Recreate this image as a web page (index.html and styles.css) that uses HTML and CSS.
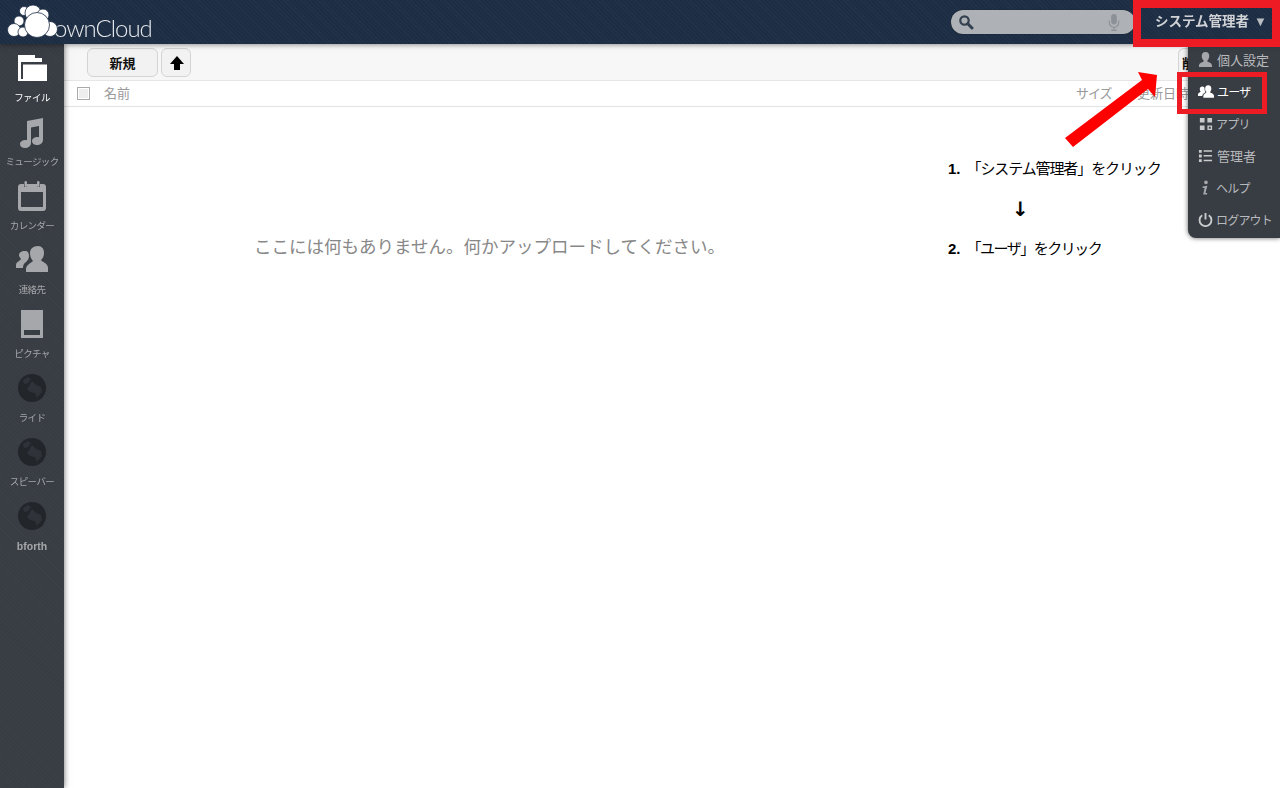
FILE: index.html
```html
<!DOCTYPE html>
<html lang="ja">
  <head>
    <meta charset="utf-8" />
    <title>ownCloud</title>
    <link rel="stylesheet" href="styles.css">
  </head>

  <body>
    <!-- HEADER -->
    <header class="header">
      <div class="logo">
        <span class="logo-text">ownCloud</span>
        <svg class="logo-cloud" viewBox="0 0 60 44">
          <g fill="#fff" stroke="#1d2d44" stroke-width=".8">
            <circle cx="24" cy="11" r="4.500"/>
            <circle cx="33" cy="13" r="8"/>
            <circle cx="43" cy="15" r="6"/>
            <circle cx="19" cy="21" r="5"/>
            <circle cx="14" cy="30" r="6.500"/>
            <circle cx="23" cy="32" r="5"/>
            <circle cx="50" cy="29" r="7.500"/>
            <circle cx="37" cy="25" r="12.500"/>
          </g>
        </svg>
      </div>
      <div class="search">
        <svg class="search-icon" viewBox="0 0 16 16">
          <circle cx="6.500" cy="6.500" r="4.200" fill="none" stroke="#33404f" stroke-width="2.200"/>
          <path d="M9.800 9.800L14 14" stroke="#33404f" stroke-width="3" stroke-linecap="round"/>
        </svg>
        <svg class="mic-icon" viewBox="0 0 12 18">
          <rect x="3" y="0" width="6" height="11" rx="3" fill="#8b9197"/>
          <path d="M1 7v2a5 5 0 0 0 10 0V7M6 14v3M3 17.300h6" fill="none" stroke="#8b9197" stroke-width="1.200"/>
        </svg>
      </div>
      <div class="user">システム管理者<span class="user-caret">▼</span></div>
    </header>

    <!-- SIDEBAR -->
    <nav class="nav">
      <a class="nav-item active">
        <svg class="nav-icon" viewBox="0 0 32 32">
          <path fill="#fff" d="M2 3H19V6H26V10H5V27H7V12.500H31V29H2z"/>
        </svg>
        <span>ファイル</span>
      </a>
      <a class="nav-item">
        <svg class="nav-icon" viewBox="0 0 32 32">
          <path fill="#a5a7aa" d="M11 5l16-3v22c0 3-3 5-6 5s-5-1.500-5-4 3-4 5.500-4c.7 0 1.500.1 1.500.3V10l-8 1.500V27c0 3-3 5-6 5s-5-1.500-5-4 3-4 5.500-4c.7 0 1.500.1 1.500.3z"/>
        </svg>
        <span>ミュージック</span>
      </a>
      <a class="nav-item">
        <svg class="nav-icon" viewBox="0 0 32 32">
          <path fill="#a5a7aa" fill-rule="evenodd" d="M5 4h3v3h3V4h10v3h3V4h3a3 3 0 0 1 3 3v21a3 3 0 0 1-3 3H5a3 3 0 0 1-3-3V7a3 3 0 0 1 3-3zM5 12v15h22V12z"/>
          <rect x="8.500" y="1" width="2.500" height="6" rx="1.200" fill="#a5a7aa"/>
          <rect x="21" y="1" width="2.500" height="6" rx="1.200" fill="#a5a7aa"/>
        </svg>
        <span>カレンダー</span>
      </a>
      <a class="nav-item">
        <svg class="nav-icon" viewBox="0 0 32 32">
          <path fill="#a5a7aa" d="M22 2c4 0 6 3 6 7 0 3-1 5-3 7 1 2 7 3 7 8v4H10v-3c0-4 5-6 7-8-2-2-3-5-3-8 0-4 3-7 8-7z"/>
          <path fill="#a5a7aa" d="M9 7c3 0 4 2 4 5 0 2-1 4-2 5-2 2-4 3-4 7H0v-3c0-3 4-4 5-6-1-1-2-3-2-4 0-2 2-4 6-4z"/>
        </svg>
        <span>連絡先</span>
      </a>
      <a class="nav-item">
        <svg class="nav-icon" viewBox="0 0 32 32">
          <path fill="#a5a7aa" fill-rule="evenodd" d="M5 2h22v28H5zM8 22v5h16v-5z"/>
        </svg>
        <span>ピクチャ</span>
      </a>
      <a class="nav-item">
        <svg class="nav-icon nav-globe" viewBox="0 0 32 32"><use href="#globe"/></svg>
        <span>ライド</span>
      </a>
      <a class="nav-item">
        <svg class="nav-icon nav-globe" viewBox="0 0 32 32"><use href="#globe"/></svg>
        <span>スピーバー</span>
      </a>
      <a class="nav-item">
        <svg class="nav-icon nav-globe" viewBox="0 0 32 32"><use href="#globe"/></svg>
        <span class="nav-latin">bforth</span>
      </a>
    </nav>

    <svg class="defs" width="0" height="0">
      <symbol id="globe" viewBox="0 0 32 32">
        <circle cx="16" cy="16" r="14" fill="#22252a"/>
        <path fill="#2f3238" d="M7 8l5-3 3 2-3 4-4 1zM16 9l4 4 5 2 1 5-5 6-2-5-5-1-3-3 2-3z"/>
      </symbol>
    </svg>

    <!-- FILES -->
    <main class="content">
      <div class="controls">
        <button class="btn btn-new">新規</button>
        <button class="btn btn-upload">
          <svg viewBox="0 0 16 16" width="16" height="16"><path d="M8 1l7 8h-4v6H5V9H1z"/></svg>
        </button>
        <button class="btn btn-trash">削</button>
      </div>
      <div class="table-head">
        <span class="check"></span>
        <span class="col-name">名前</span>
        <span class="col-size">サイズ</span>
        <span class="col-date">更新日時</span>
      </div>
      <p class="empty">ここには何もありません。何かアップロードしてください。</p>
    </main>

    <!-- USER MENU -->
    <ul class="menu">
      <li>
        <svg viewBox="0 0 16 16"><path fill="#a5a7aa" d="M8 0c3 0 4 2 4 4.500 0 2-1 3.500-2 4.500v1c1 1 5 1 5 5v1H1v-1c0-4 4-4 5-5V9C5 8 4 6.500 4 4.500 4 2 5 0 8 0z"/></svg>
        個人設定
      </li>
      <li class="current kana">
        <svg viewBox="0 0 18 16"><path fill="#fff" d="M11.500 1c2.500 0 3.500 1.800 3.500 3.800 0 1.700-.8 3-1.500 3.700 0 1 4.500 1.500 4.500 4.500V15H6v-2c0-2 3-3 3.500-4.500C8.700 7.500 8 6.500 8 4.800 8 2.800 9 1 11.500 1zM5 2.500c1.600 0 2.300 1 2.400 2.200 0 1.300.2 2.800 1 3.800C7 10 4.800 11 4.800 13H0v-2c0-1.500 2.700-2 3-3C2.400 7.300 2 6.300 2 5.200 2 3.700 3 2.500 5 2.500z"/></svg>
        ユーザ
      </li>
      <li class="kana">
        <svg viewBox="0 0 16 16"><path fill="#c9cacb" d="M2 2h5v5H2zM10 2h5v5h-5zM2 10h5v5H2z"/><path fill="none" stroke="#c9cacb" stroke-width="1.500" d="M10.800 10.800h3.500v3.500h-3.500z"/></svg>
        アプリ
      </li>
      <li>
        <svg viewBox="0 0 16 16"><path fill="#c9cacb" d="M1 2h3v3H1zM1 7h3v3H1zM1 12h3v3H1zM6 2.500h9v1.500H6zM6 7.500h9V9H6zM6 12.500h9V14H6z"/></svg>
        管理者
      </li>
      <li class="kana">
        <svg viewBox="0 0 16 16"><path fill="#a5a7aa" d="M8.500 0.500a2 2 0 1 1 0 4 2 2 0 0 1 0-4zM5 7l5-1-2 7.500 2 .5-.5 1.500H5.500L7 8.500 5 8.500z"/></svg>
        ヘルプ
      </li>
      <li class="kana">
        <svg viewBox="0 0 16 16"><path fill="none" stroke="#c9cacb" stroke-width="2" d="M4.500 3.500a6.300 6.300 0 1 0 7 0M8 1v7"/></svg>
        ログアウト
      </li>
    </ul>

    <!-- ANNOTATIONS -->
    <div class="mark mark-user"></div>
    <div class="mark mark-item"></div>
    <svg class="mark-arrow" viewBox="0 0 1280 788">
      <path fill="#f00" d="M1065 138L1142 80 1138 72 1157 75 1155 97 1148 89 1073 147z"/>
    </svg>
    <ol class="steps">
      <li><b>1.</b>「システム管理者」をクリック</li>
      <li class="steps-down">↓</li>
      <li class="steps-short"><b>2.</b>「ユーザ」をクリック</li>
    </ol>
  </body>
</html>
```

FILE: styles.css
```css
* {
  box-sizing: border-box;
}
html, body {
  height: 100%;
}
body {
  margin: 0;
  overflow: hidden;
  background: #fff;
  font-family: "Liberation Sans", "Noto Sans CJK JP", sans-serif;
  font-size: 13px;
  color: #555;
}

/* header */
.header {
  position: relative;
  z-index: 3;
  display: flex;
  align-items: center;
  height: 44px;
  background: #1d2d44 repeating-linear-gradient(45deg, rgba(255, 255, 255, .025) 0 1px, transparent 1px 3px);
  box-shadow: 0 0 6px rgba(0, 0, 0, .55);
}
.logo {
  position: relative;
  width: 160px;
  height: 44px;
  margin-right: auto;
}
.logo-cloud {
  position: absolute;
  left: 0;
  top: 0;
  width: 60px;
  height: 44px;
}
.logo-text {
  position: absolute;
  left: 54px;
  top: 12px;
  font-family: Lato, sans-serif;
  font-weight: 300;
  font-size: 24px;
  line-height: 32px;
  letter-spacing: -1px;
  color: #e6e8eb;
}
.search {
  display: flex;
  align-items: center;
  justify-content: space-between;
  width: 184px;
  height: 24px;
  margin-right: 6px;
  padding: 0 15px 0 7px;
  border-radius: 12px;
  background: #aeb2b7;
  box-shadow: 0 0 1px #000;
}
.search-icon {
  width: 16px;
  height: 16px;
}
.mic-icon {
  width: 12px;
  height: 17px;
}
.user {
  width: 139px;
  height: 44px;
  padding-left: 14px;
  line-height: 44px;
  font-size: 13.500px;
  font-weight: 700;
  color: #d0d2d6;
  white-space: nowrap;
}
.user-caret {
  margin-left: 5px;
  font-size: 13px;
  color: #b9bcc1;
}

/* sidebar */
.nav {
  position: fixed;
  left: 0;
  top: 44px;
  bottom: 0;
  z-index: 2;
  width: 64px;
  padding-top: 8px;
  background: #383c43 repeating-linear-gradient(45deg, rgba(255, 255, 255, .015) 0 1px, transparent 1px 3px);
  box-shadow: 0 0 6px rgba(0, 0, 0, .6);
}
.nav-item {
  display: flex;
  flex-direction: column;
  align-items: center;
  height: 64px;
  font-size: 9.500px;
  line-height: 14px;
  letter-spacing: -.6px;
  color: #a5a7aa;
  white-space: nowrap;
}
.nav-item.active {
  color: #fff;
}
.nav-icon {
  width: 32px;
  height: 32px;
  margin-bottom: 7px;
}
.nav-globe {
  filter: blur(.5px);
}
.nav-latin {
  font-size: 10.500px;
  font-weight: 700;
  letter-spacing: 0;
}
.defs {
  position: absolute;
}

/* file list */
.content {
  margin-left: 64px;
}
.controls {
  display: flex;
  align-items: center;
  height: 37px;
  padding: 1px 92px 0 23px;
  gap: 3px;
  background: #f7f7f7;
  border-bottom: 1px solid #e6e6e6;
}
.btn {
  display: flex;
  align-items: center;
  justify-content: center;
  height: 29px;
  padding: 0;
  border: 1px solid #d4d4d4;
  border-radius: 6px;
  background: #f2f2f2;
  font: 700 13px "Liberation Sans", "Noto Sans CJK JP", sans-serif;
  color: #111;
}
.btn-new {
  width: 71px;
}
.btn-upload {
  width: 30px;
  padding-left: 1px;
}
.btn-trash {
  width: 10px;
  margin-left: auto;
  justify-content: flex-start;
  padding-left: 3px;
  border-right: 0;
  border-radius: 6px 0 0 6px;
  overflow: hidden;
}
.table-head {
  display: flex;
  align-items: center;
  height: 26px;
  padding: 0 0 2px 13px;
  border-bottom: 1px solid #e3e3e3;
  color: #999;
  font-size: 13px;
}
.check {
  width: 13px;
  height: 13px;
  margin-top: 2px;
  border: 1px solid #aaa;
  background: #eee;
  box-shadow: inset 0 0 0 1px #fff;
}
.col-name {
  margin-left: 14px;
  margin-right: auto;
}
.col-size {
  width: 61px;
  letter-spacing: -1px;
}
.col-date {
  width: 143px;
}
.empty {
  margin: 128px 0 0 190px;
  font-size: 17.500px;
  line-height: 24px;
  color: #888;
}

/* user menu */
.menu {
  position: absolute;
  right: 0;
  top: 44px;
  z-index: 2;
  width: 92px;
  height: 194px;
  margin: 0;
  padding: 0;
  list-style: none;
  background: #383c43;
  border-bottom-left-radius: 8px;
  box-shadow: 0 0 5px rgba(0, 0, 0, .6);
  color: #b8babd;
}
.menu li {
  display: flex;
  align-items: center;
  gap: 4px;
  height: 32px;
  padding: 0 0 2px 10px;
  white-space: nowrap;
}
.menu li svg {
  width: 15px;
  height: 15px;
  flex: none;
}
.menu li.kana {
  gap: 3px;
  padding-bottom: 1px;
  font-size: 12px;
  letter-spacing: -.8px;
}
.menu li.current {
  color: #fff;
}
.menu li.current svg {
  width: 16px;
  height: 15px;
}

/* red annotations pasted on the shot */
.mark {
  position: absolute;
  z-index: 4;
  border-style: solid;
  border-color: #ed1c24;
}
.mark-user {
  left: 1133px;
  top: 0;
  width: 147px;
  height: 47px;
  border-width: 8px;
}
.mark-item {
  left: 1177px;
  top: 72px;
  width: 90px;
  height: 42px;
  border-width: 5px;
}
.mark-arrow {
  position: absolute;
  left: 0;
  top: 0;
  z-index: 4;
  width: 1280px;
  height: 788px;
  pointer-events: none;
}
.steps {
  position: absolute;
  left: 948px;
  top: 157px;
  z-index: 1;
  margin: 0;
  padding: 0;
  list-style: none;
  font-size: 15px;
  line-height: 24px;
  letter-spacing: -1.100px;
  color: #000;
}
.steps li {
  height: 40px;
  white-space: nowrap;
}
.steps b {
  margin-right: 6px;
  letter-spacing: 0;
}
.steps-down {
  padding-left: 64px;
  font-family: "DejaVu Sans", sans-serif;
  font-size: 20px;
  font-weight: 700;
}
.steps-short {
  letter-spacing: -1.500px;
}
```
